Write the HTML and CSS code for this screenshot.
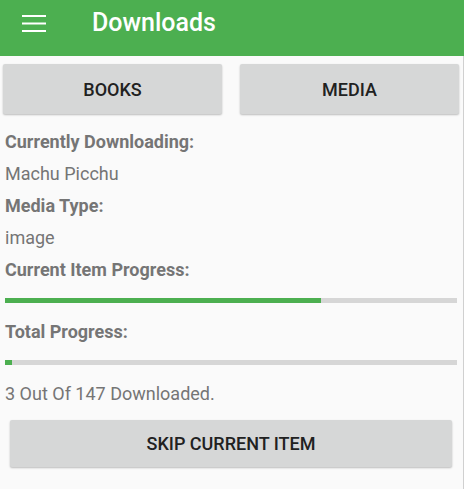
FILE: index.html
```html
<!DOCTYPE html>
<html>
    <head>
        <title>Downloads</title>
        <link rel="stylesheet" href="styles.css">
    </head>
    <body>
        <header class="toolbar">
            <svg class="menu" width="24" height="18" viewBox="0 0 24 18">
                <rect x="0" y="0" width="24" height="2" fill="#fff"/>
                <rect x="0" y="7.5" width="24" height="2" fill="#fff"/>
                <rect x="0" y="15" width="24" height="2" fill="#fff"/>
            </svg>
            <h1 class="title">Downloads</h1>
        </header>
        <main class="content">
            <div class="tabs">
                <button class="btn">BOOKS</button>
                <button class="btn">MEDIA</button>
            </div>
            <div class="info">
                <p class="label">Currently Downloading:</p>
                <p class="value">Machu Picchu</p>
                <p class="label">Media Type:</p>
                <p class="value">image</p>
                <p class="label">Current Item Progress:</p>
                <div class="bar"><div class="fill" style="width: 70%"></div></div>
                <p class="label">Total Progress:</p>
                <div class="bar"><div class="fill" style="width: 1.6%"></div></div>
                <p class="value">3 Out Of 147 Downloaded.</p>
            </div>
            <button class="btn skip">SKIP CURRENT ITEM</button>
        </main>
    </body>
</html>
```
FILE: styles.css
```css
body{
    margin: 0;
    background-color: #fafafa;
    font-family: Roboto, "Noto Sans", sans-serif;
    width: 464px;
    height: 489px;
    overflow: hidden;
}
p{
    margin: 0;
}
.toolbar{
    height: 56px;
    background-color: #4caf50;
    display: flex;
    align-items: center;
    padding-left: 22px;
    box-sizing: border-box;
}
.menu{
    margin-top: -9px;
}
.title{
    margin: -11px 0 0 46px;
    color: #fff;
    font-size: 25px;
    font-weight: 500;
}
.content{
    border-right: 1px solid #d0d0d0;
    height: 433px;
    box-sizing: border-box;
}
.tabs{
    display: grid;
    grid-template-columns: 219px 219px;
    column-gap: 18px;
    padding: 8px 0 0 3px;
}
.btn{
    border: none;
    background-color: #d6d7d7;
    border-radius: 2px;
    height: 50px;
    font-family: Roboto, sans-serif;
    font-size: 18px;
    font-weight: 500;
    color: #212121;
    box-shadow: 0 1px 2px rgba(0, 0, 0, 0.25);
}
.info{
    padding: 16px 6px 0 5px;
    color: #757575;
    font-size: 18px;
}
.label{
    font-weight: bold;
    height: 32px;
    line-height: 24px;
}
.value{
    height: 32px;
    line-height: 24px;
}
.bar{
    height: 5px;
    background-color: #d6d6d6;
    margin: 8px 0 17px;
}
.fill{
    height: 100%;
    background-color: #4caf50;
}
.skip{
    display: block;
    width: 442px;
    height: 47px;
    margin: 6px 0 0 10px;
}
```
